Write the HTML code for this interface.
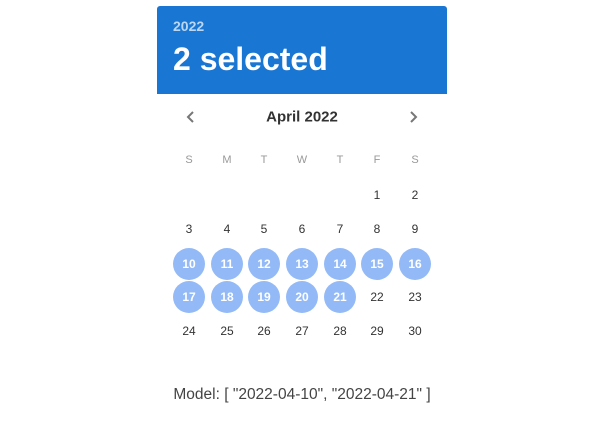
<!DOCTYPE html>
<html><head><style>
body{margin:0;width:602px;height:436px;background:#fff;font-family:"Liberation Sans",sans-serif;position:relative;overflow:hidden}
.hdr{position:absolute;left:157px;top:6px;width:290px;height:88px;background:#1976d2;border-radius:3px 3px 0 0}
.yr{position:absolute;left:16px;top:12px;font-size:14px;color:rgba(255,255,255,.7);font-weight:bold}
.sel{position:absolute;left:16px;top:35px;font-size:32px;color:#fff;font-weight:bold}
.t{position:absolute;transform:translate(-50%,-50%);white-space:nowrap}
.d{font-size:12px;color:#333}
.w{font-size:11px;color:#999}
.c{width:32px;height:32px;border-radius:50%;background:#93baf7;color:#fff;font-weight:bold;display:flex;align-items:center;justify-content:center}
</style></head><body>
<div class="hdr"><div class="yr">2022</div><div class="sel">2 selected</div></div>
<div class="t" style="left:302px;top:117px;font-size:15px;font-weight:bold;color:#333">April 2022</div>
<svg style="position:absolute;left:184px;top:110px" width="14" height="14"><path d="M9 2L4 7L9 12" stroke="#777" stroke-width="2" fill="none"/></svg>
<svg style="position:absolute;left:406px;top:110px" width="14" height="14"><path d="M5 2L10 7L5 12" stroke="#777" stroke-width="2" fill="none"/></svg>
<div id="g"></div>
<div class="t" style="left:302px;top:395px;font-size:15.5px;color:#444">Model: [ "2022-04-10", "2022-04-21" ]</div>
<script>
var xs=[189,227,264,302,340,377,415],ys=[195,229,264,297,331],h='';
"SMTWTFS".split('').forEach(function(l,i){h+='<div class="t w" style="left:'+xs[i]+'px;top:160px">'+l+'</div>';});
for(var d=1;d<=30;d++){var p=d+4,c=p%7,r=Math.floor(p/7);var s=d>=10&&d<=21;
h+='<div class="t d'+(s?' c':'')+'" style="left:'+xs[c]+'px;top:'+ys[r]+'px">'+d+'</div>';}
document.getElementById('g').innerHTML=h;
</script>
</body></html>
